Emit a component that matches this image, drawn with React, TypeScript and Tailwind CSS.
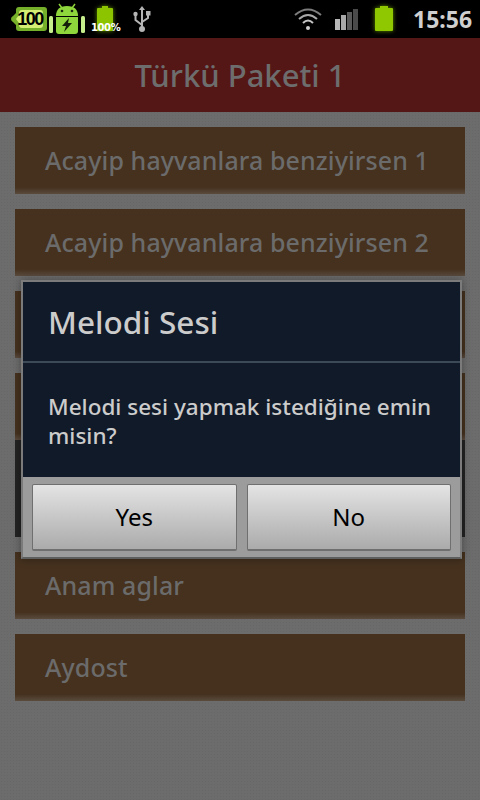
const FONT = "font-['Noto_Sans','Open_Sans',sans-serif]";

const songs = ["Acayip hayvanlara benziyirsen 1", "Acayip hayvanlara benziyirsen 2", "", ""];

const BatteryBadge = () => (
  <div className="relative ml-[11px] mt-[7px] h-[24px] w-[36px]">
    <svg width="36" height="24" viewBox="0 0 36 24" className="absolute left-0 top-0">
      <path d="M0 12 Q0 10 2 9 L5 6 V3 Q5 0 8 0 H33 Q36 0 36 3 V21 Q36 24 33 24 H8 Q5 24 5 21 V18 L2 15 Q0 14 0 12 Z" fill="#76b02a" />
      <path d="M5 12 L8 8 V6 Q8 3 11 3 H29 Q32 3 32 6 V18 Q32 21 29 21 H11 Q8 21 8 18 V16 Z" fill="#d5ef74" />
    </svg>
    <span className="absolute left-[6px] top-[1px] w-[26px] text-center font-['Liberation_Sans',sans-serif] text-[18px] leading-[22px] font-bold tracking-[-1.5px] text-black">
      100
    </span>
  </div>
);

const AndroidIcon = () => (
  <svg width="36" height="32" viewBox="0 0 36 32" className="ml-[2px] mt-[3px]">
    <path d="M10 1 L13 5 M26 1 L23 5" stroke="#8fd13a" strokeWidth="1.5" />
    <path d="M7 13 Q7 3 18 3 Q29 3 29 13 Z" fill="#8ed63b" />
    <circle cx="13" cy="8" r="1.3" fill="#1c2a10" />
    <circle cx="23" cy="8" r="1.3" fill="#1c2a10" />
    <path d="M7 14 H29 V28 Q29 31 26 31 H10 Q7 31 7 28 Z" fill="#8ed63b" />
    <rect x="0" y="13" width="4" height="17" rx="1.5" fill="#c7ee8c" />
    <rect x="32" y="13" width="4" height="17" rx="1.5" fill="#c7ee8c" />
    <path d="M20 15 L13 23 H17 L15 29 L23 20 H19 Z" fill="#14200a" />
  </svg>
);

const SmallBattery = () => (
  <div className="relative ml-[6px] h-[38px] w-[28px]">
    <svg width="18" height="26" viewBox="0 0 18 26" className="absolute left-[5px] top-[6px] drop-shadow-[0_0_2px_#5f8a00]">
      <path d="M6 0 H12 V2 H16 Q17 2 17 3 V25 H1 V3 Q1 2 2 2 H6 Z" fill="#8cc400" />
    </svg>
    <span className="absolute left-0 top-[22px] w-[28px] text-center font-['DejaVu_Sans',sans-serif] text-[10px] leading-[12px] font-bold tracking-[-0.4px] text-white">
      100%
    </span>
  </div>
);

const UsbIcon = () => (
  <svg width="18" height="26" viewBox="0 0 18 26" className="ml-[14px] mt-[6px]">
    <path d="M9 0 L12 4 H10 V22 H8 V4 H6 Z" fill="#b5b5b5" />
    <circle cx="9" cy="23" r="3" fill="#b5b5b5" />
    <path d="M9 19 L2.5 14 V9 M9 16 L15 12 V8" stroke="#b5b5b5" strokeWidth="2" fill="none" />
    <circle cx="2.5" cy="8" r="2.2" fill="#b5b5b5" />
    <rect x="13" y="5" width="4.5" height="4.5" fill="#b5b5b5" />
  </svg>
);

const WifiIcon = () => (
  <svg width="28" height="24" viewBox="0 0 28 24" className="mt-[7px]">
    <path d="M1 8 Q14 -3 27 8" stroke="#7d7d7d" strokeWidth="2" fill="none" />
    <path d="M5 12 Q14 4 23 12" stroke="#a8a8a8" strokeWidth="2" fill="none" />
    <path d="M9 16 Q14 11 19 16" stroke="#c4c4c4" strokeWidth="2" fill="none" />
    <circle cx="14" cy="21" r="2" fill="#d0d0d0" />
  </svg>
);

const SignalIcon = () => (
  <div className="ml-[13px] mt-[9px] flex h-[21px] items-end gap-[1px]">
    <div className="h-[11px] w-[5px] bg-[#b8b8b8]" />
    <div className="h-[15px] w-[5px] bg-[#a8a8a8]" />
    <div className="h-[18px] w-[5px] bg-[#5a5a5a]" />
    <div className="h-[21px] w-[5px] bg-[#4a4a4a]" />
  </div>
);

const StatusBar = () => (
  <div className="flex h-[38px] items-start bg-black">
    <BatteryBadge />
    <AndroidIcon />
    <SmallBattery />
    <UsbIcon />
    <div className="ml-auto flex items-start">
      <WifiIcon />
      <SignalIcon />
      <svg width="20" height="26" viewBox="0 0 20 26" className="ml-[16px] mt-[6px] drop-shadow-[0_0_2px_#5f8a00]">
        <path d="M6 0 H14 V2 H18 Q19 2 19 3 V24 Q19 25 18 25 H2 Q1 25 1 24 V3 Q1 2 2 2 H6 Z" fill="#8fc800" />
      </svg>
      <span className="ml-[19px] mr-[9px] mt-[4px] w-[58px] text-[23px] leading-[30px] font-bold whitespace-nowrap text-[#cfcfcf]">
        15:56
      </span>
    </div>
  </div>
);

const SongRow = ({ title }: { title: string }) => (
  <div className="flex h-[67px] items-center bg-linear-to-b from-[#45311e] from-[90%] to-[#5a4b3e] pl-[30px] text-[25px] font-medium tracking-[0.1px] text-[#6b6b6b]">
    {title}
  </div>
);

const DialogButton = ({ label }: { label: string }) => (
  <button className="flex h-[67px] flex-1 items-center justify-center rounded-[2px] border border-b-2 border-[#6f6f6f] bg-linear-to-b from-[#e4e4e4] to-[#ababab] text-[24px] text-black">
    {label}
  </button>
);

const App = () => (
  <div className={`relative h-[800px] w-[480px] overflow-hidden bg-[#6c6c6c] bg-[radial-gradient(#676767_0.7px,transparent_0.8px)] bg-[length:3px_3px] ${FONT}`}>
    <StatusBar />
    <div className="flex h-[74px] items-center justify-center bg-[#551616] text-[31px] font-medium text-[#6d6d6d]">
      Türkü Paketi 1
    </div>
    <div className="flex flex-col px-[15px] pt-[15px]">
      <div className="flex flex-col gap-[15px]">
        {songs.map((title, i) => (
          <SongRow key={i} title={title} />
        ))}
      </div>
      <div className="h-[97px] bg-[#232323]" />
      <div className="mt-[15px] flex flex-col gap-[15px]">
        <SongRow title="Anam aglar" />
        <SongRow title="Aydost" />
      </div>
    </div>

    <div className="absolute left-[21px] top-[280px] w-[441px] border-x-2 border-t-2 border-b-2 border-x-[#7b7b7b] border-t-[#7b7b7b] border-b-[#5e5e5e] shadow-[0_0_8px_rgba(0,0,0,0.35)]">
      <div className="bg-[#111a28]">
        <div className="flex h-[81px] items-center border-b-2 border-[#3b4a56] pl-[25px] text-[31.5px] font-medium text-[#cccccc]">
          Melodi Sesi
        </div>
        <div className="h-[114px] pl-[25px] pr-[20px] pt-[29px] text-[22.5px] leading-[29px] font-medium text-[#cccccc]">
          Melodi sesi yapmak istediğine emin misin?
        </div>
      </div>
      <div className="flex gap-[10px] bg-[#9c9c9c] pb-[6px] pl-[9px] pr-[9px] pt-[7px]">
        <DialogButton label="Yes" />
        <DialogButton label="No" />
      </div>
    </div>
  </div>
);

export default App;
